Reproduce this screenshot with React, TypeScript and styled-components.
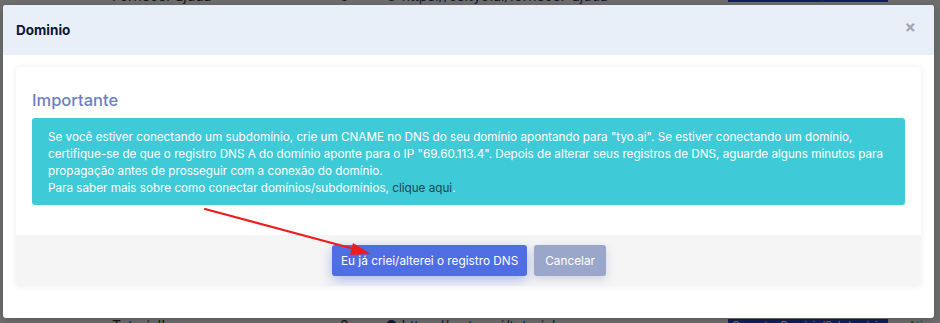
import React from 'react';
import styled, { createGlobalStyle } from 'styled-components';

const GlobalStyle = createGlobalStyle`
  html, body {
    margin: 0;
    padding: 0;
    width: 940px;
    height: 323px;
    overflow: hidden;
    font-family: Inter, 'Open Sans', sans-serif;
  }
`;

const Page = styled.div`
  position: relative;
  width: 940px;
  height: 323px;
  background: #f3f4f7;
  overflow: hidden;
`;

const Table = styled.div`
  height: 100%;
  display: flex;
  flex-direction: column;
  justify-content: space-between;
`;

const Row = styled.div<{ $bottom?: boolean }>`
  display: grid;
  grid-template-columns: 112px 228px 45px 343px 180px 32px;
  align-items: center;
  height: 22px;
  font-size: 14px;
  color: #333;
  white-space: nowrap;
  margin-top: ${p => (p.$bottom ? '0' : '-16px')};
  margin-bottom: ${p => (p.$bottom ? '-13px' : '0')};
`;

const Cell = styled.span``;

const Badge = styled.span`
  background: #2d46c8;
  color: #fff;
  font-size: 10.5px;
  padding: 0 4px;
  justify-self: start;
`;

const Status = styled.span`
  color: #1f9e4e;
  font-size: 12px;
`;

const LinkIcon = styled.span`
  display: flex;
  align-items: center;
  gap: 6px;
  color: #2a3b70;
`;

const Backdrop = styled.div`
  position: absolute;
  inset: 0;
  background: rgba(0, 0, 0, 0.55);
`;

const Modal = styled.div`
  position: absolute;
  top: 5px;
  left: 3px;
  width: 931px;
  height: 313px;
  background: #fff;
  border-radius: 3px;
  display: flex;
  flex-direction: column;
  overflow: hidden;
  box-shadow: 0 2px 8px rgba(0, 0, 0, 0.2);
`;

const ModalHeader = styled.div`
  height: 50px;
  background: #e9eff9;
  display: flex;
  align-items: center;
  justify-content: space-between;
  padding: 0 18px 0 13px;
  box-sizing: border-box;
  flex-shrink: 0;
`;

const ModalTitle = styled.h5`
  margin: 0;
  font-size: 13.5px;
  font-weight: 700;
  color: #0d1633;
`;

const Close = styled.span`
  font-size: 17px;
  font-weight: 700;
  color: #a3a8b3;
  line-height: 1;
  margin-top: -6px;
`;

const ModalBody = styled.div`
  padding: 12px 13px 32px 13px;
  flex: 1;
  display: flex;
`;

const Card = styled.div`
  flex: 1;
  display: flex;
  flex-direction: column;
  border-radius: 4px;
  box-shadow: 0 0 6px rgba(0, 0, 0, 0.08);
  overflow: hidden;
`;

const CardBody = styled.div`
  padding: 25px 16px 30px 16px;
`;

const CardTitle = styled.h4`
  margin: 0 0 10px 0;
  font-size: 16.5px;
  font-weight: 500;
  color: #6e7fc1;
  line-height: 16px;
`;

const Alert = styled.div`
  background: #3fcad7;
  color: #fff;
  border-radius: 3px;
  padding: 11px 16px 8px 16px;
  font-size: 11.7px;
  line-height: 17px;
`;

const Line = styled.div`
  white-space: nowrap;
`;

const AlertLink = styled.a`
  color: #1d4658;
  text-decoration: none;
`;

const CardFooter = styled.div`
  flex: 1;
  background: #f5f5f5;
  display: flex;
  justify-content: center;
  align-items: center;
  gap: 7px;
  padding-left: 1px;
`;

const Button = styled.button<{ $variant: 'primary' | 'muted' }>`
  height: 31px;
  border: none;
  border-radius: 3px;
  padding: ${p => (p.$variant === 'primary' ? '0 9px' : '0 11px')};
  font-family: inherit;
  font-size: 11.8px;
  color: #fff;
  background: ${p => (p.$variant === 'primary' ? '#4f6ee3' : '#9aa6ca')};
  box-shadow: ${p =>
    p.$variant === 'primary'
      ? '0 4px 12px rgba(79, 110, 227, 0.45)'
      : '0 3px 8px rgba(120, 130, 170, 0.3)'};
`;

const Arrow = styled.svg`
  position: absolute;
  left: 0;
  top: 0;
  pointer-events: none;
`;

export default function App() {
  return (
    <>
      <GlobalStyle />
      <Page>
        <Table>
          <Row>
            <Cell />
            <Cell>Fornecer ajuda</Cell>
            <Cell>8</Cell>
            <LinkIcon>● https://cs.tyo.ai/fornecer-ajuda</LinkIcon>
            <Badge>Conectar Domínio/Subdomínio</Badge>
            <Status>Ativo</Status>
          </Row>
          <Row $bottom>
            <Cell />
            <Cell>Tutorial!</Cell>
            <Cell>3</Cell>
            <LinkIcon>● https://cs.tyo.ai/tutorial</LinkIcon>
            <Badge>Conectar Domínio/Subdomínio</Badge>
            <Status>Ativo</Status>
          </Row>
        </Table>
        <Backdrop />
        <Modal>
          <ModalHeader>
            <ModalTitle>Dominio</ModalTitle>
            <Close>×</Close>
          </ModalHeader>
          <ModalBody>
            <Card>
              <CardBody>
                <CardTitle>Importante</CardTitle>
                <Alert>
                  <Line>
                    Se você estiver conectando um subdomínio, crie um CNAME no DNS do seu domínio apontando para "tyo.ai". Se estiver conectando um domínio,
                  </Line>
                  <Line>
                    certifique-se de que o registro DNS A do domínio aponte para o IP "69.60.113.4". Depois de alterar seus registros de DNS, aguarde alguns minutos para
                  </Line>
                  <Line>propagação antes de prosseguir com a conexão do domínio.</Line>
                  <Line>
                    Para saber mais sobre como conectar domínios/subdomínios, <AlertLink href="#">clique aqui</AlertLink>.
                  </Line>
                </Alert>
              </CardBody>
              <CardFooter>
                <Button $variant="primary">Eu já criei/alterei o registro DNS</Button>
                <Button $variant="muted">Cancelar</Button>
              </CardFooter>
            </Card>
          </ModalBody>
        </Modal>
        <Arrow width="940" height="323" viewBox="0 0 940 323">
          <line x1="205" y1="209" x2="358" y2="250" stroke="#ee1c1c" strokeWidth="2.2" strokeLinecap="round" />
          <polygon points="371,254 353,243 350,255" fill="#ee1c1c" />
        </Arrow>
      </Page>
    </>
  );
}
